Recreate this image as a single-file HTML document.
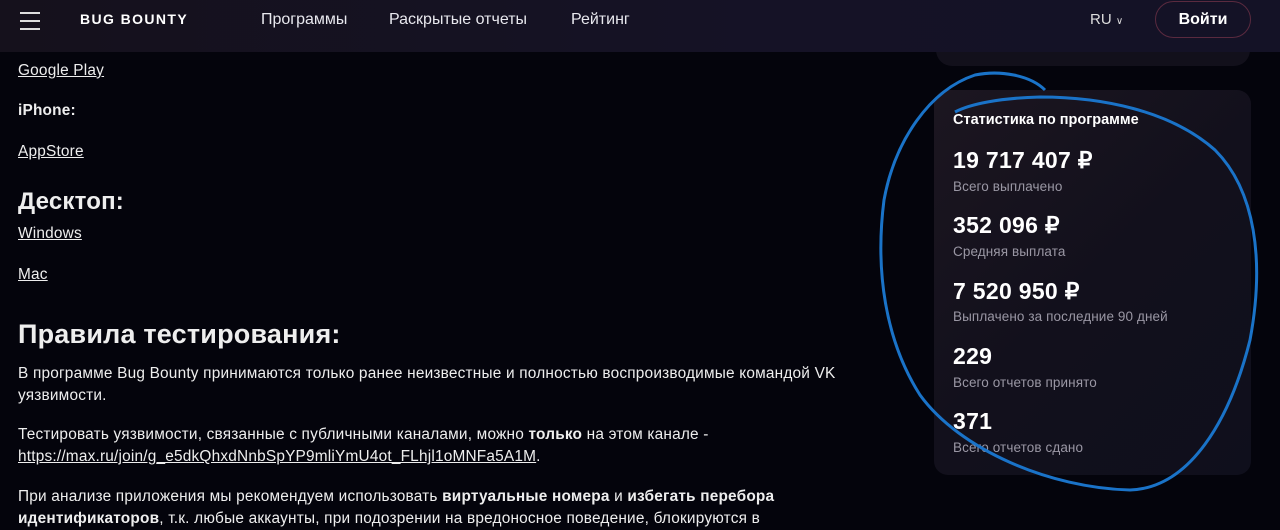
<!DOCTYPE html>
<html><head><meta charset="utf-8"><style>
*{margin:0;padding:0;box-sizing:border-box}
body{width:1280px;height:524px;overflow:hidden;background:#04040c;font-family:"Liberation Sans",sans-serif;color:#fff;position:relative}
.hdr{position:absolute;left:0;top:0;width:1280px;height:52px;background:linear-gradient(90deg,#15111c,#151226 60%,#141226);z-index:2}
.hdr .burger{position:absolute;left:20px;top:12px;width:20px}
.hdr .burger i{display:block;height:2px;background:#ddd;margin-bottom:6px}
.logo{position:absolute;left:80px;top:11px;font-weight:900;font-size:14px;letter-spacing:1.4px}
.nav{position:absolute;top:11px;font-size:16px;color:#e8e8ee}
.ru{position:absolute;left:1090px;top:11px;font-size:15px;color:#ddd}
.btn{position:absolute;left:1155px;top:1px;width:96px;height:37px;border-radius:19px;border:1.5px solid #5a2a3f;font-weight:bold;font-size:16px;text-align:center;line-height:35px}
.topcard{position:absolute;left:936px;top:30px;width:314px;height:36px;background:#12101b;border-radius:0 0 16px 16px}
.main{position:absolute;left:18px;top:1px;width:870px;font-size:15.4px;letter-spacing:0.2px;color:#eee}
.main a{color:#eee;text-decoration:underline;position:absolute}
.main p{position:absolute;left:0}
h2{font-weight:bold;letter-spacing:0.2px}
.card{position:absolute;left:934px;top:90px;width:317px;height:385px;border-radius:14px;background:linear-gradient(135deg,#1c1620,#12101c 50%,#0f0f1c)}
.card .h{position:absolute;left:19px;top:22px;font-weight:bold;font-size:14.5px}
.card .n{position:absolute;left:19px;font-weight:bold;font-size:23px;letter-spacing:0.3px}
.card .l{position:absolute;left:19px;font-size:13.5px;color:#9a97a4;letter-spacing:0.1px}
</style></head><body>
<div class="hdr">
<div class="burger"><i></i><i></i><i></i></div>
<div class="logo">BUG BOUNTY</div>
<div class="nav" style="left:261px">Программы</div>
<div class="nav" style="left:389px">Раскрытые отчеты</div>
<div class="nav" style="left:571px">Рейтинг</div>
<div class="ru">RU <span style="font-size:10px">&#8744;</span></div>
<div class="btn">Войти</div>
</div>
<div class="topcard"></div>
<div class="main">
<a style="left:0;top:61px">Google Play</a>
<p style="top:101px;font-weight:bold">iPhone:</p>
<a style="left:0;top:142px">AppStore</a>
<h2 style="position:absolute;top:187px;font-size:24px">Десктоп:</h2>
<a style="left:0;top:224px">Windows</a>
<a style="left:0;top:265px">Mac</a>
<h2 style="position:absolute;top:318px;font-size:27px">Правила тестирования:</h2>
<p style="top:362px;line-height:22px;width:870px">В программе Bug Bounty принимаются только ранее неизвестные и полностью воспроизводимые командой VK уязвимости.</p>
<p style="top:423px;line-height:22px;width:870px">Тестировать уязвимости, связанные с публичными каналами, можно <b>только</b> на этом канале - <u>https://max.ru/join/g_e5dkQhxdNnbSpYP9mliYmU4ot_FLhjl1oMNFa5A1M</u>.</p>
<p style="top:485px;line-height:22px;width:830px">При анализе приложения мы рекомендуем использовать <b>виртуальные номера</b> и <b>избегать перебора идентификаторов</b>, т.к. любые аккаунты, при подозрении на вредоносное поведение, блокируются в</p>
</div>
<div class="card">
<div class="h">Статистика по программе</div>
<div class="n" style="top:57px">19 717 407 ₽</div><div class="l" style="top:89px">Всего выплачено</div>
<div class="n" style="top:122px">352 096 ₽</div><div class="l" style="top:154px">Средняя выплата</div>
<div class="n" style="top:188px">7 520 950 ₽</div><div class="l" style="top:219px">Выплачено за последние 90 дней</div>
<div class="n" style="top:253px">229</div><div class="l" style="top:285px">Всего отчетов принято</div>
<div class="n" style="top:318px">371</div><div class="l" style="top:350px">Всего отчетов сдано</div>
</div>
<svg style="position:absolute;left:0;top:0" width="1280" height="524"><path d="M1045 90 C1030 75 1000 70 975 75 C930 90 895 140 884 200 C875 270 885 340 920 395 C960 450 1050 488 1130 490 C1190 488 1230 420 1250 340 C1265 260 1255 190 1215 150 C1170 110 1100 97 1040 97 C1000 98 970 104 955 112" fill="none" stroke="#1a73c8" stroke-width="3"/></svg>
</body></html>
